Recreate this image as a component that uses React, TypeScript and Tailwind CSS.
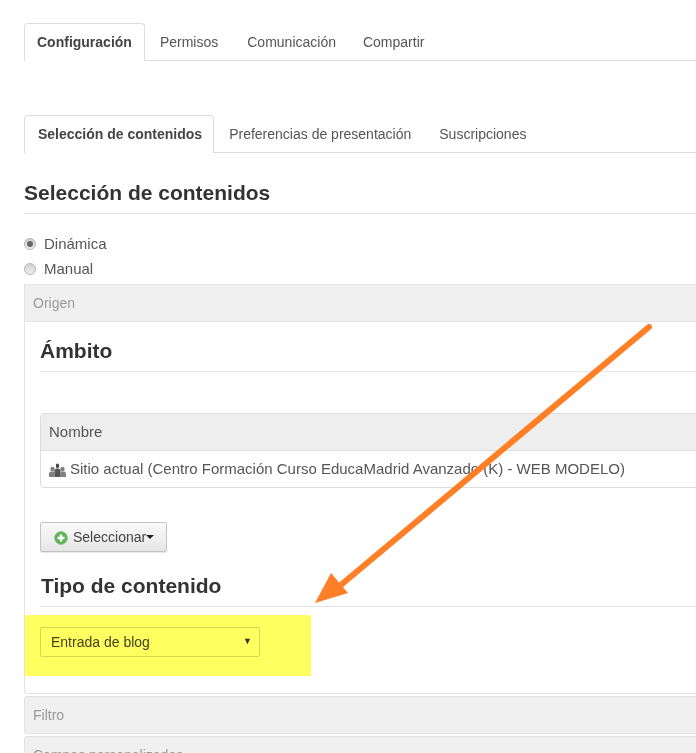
import React from 'react';

const font = { fontFamily: '"Liberation Sans", Arial, sans-serif' };

function Tab({ label, active, px }: { label: string; active?: boolean; px: string }) {
  return (
    <div
      className={`${px} h-[38px] -mb-px flex items-center rounded-t-[4px] border border-b-0 ${
        active
          ? 'bg-white border-[#dddddd] font-bold text-[#444444]'
          : 'border-transparent text-[#555555]'
      }`}
    >
      {label}
    </div>
  );
}

function Heading({ children, className }: { children: React.ReactNode; className: string }) {
  return <div className={`border-b border-[#e5e5e5] font-bold text-[#333333] text-[21px] leading-[24px] ${className}`}>{children}</div>;
}

function Radio({ checked, label }: { checked?: boolean; label: string }) {
  return (
    <div className="flex items-center h-[25px] text-[15px] text-[#555555]">
      <span className="w-[12px] h-[12px] -mt-[1px] rounded-full border border-[#b5b5b5] bg-gradient-to-b from-[#d0d0d0] to-[#f0f0f0] flex items-center justify-center mr-[8px]">
        {checked && <span className="w-[6px] h-[6px] rounded-full bg-[#666666]" />}
      </span>
      {label}
    </div>
  );
}

function SectionBar({ label, className }: { label: string; className: string }) {
  return (
    <div className={`border border-[#e3e3e3] rounded-t-[3px] bg-[#f0f0f0] px-2 flex items-center text-[14px] text-[#999999] ${className}`}>
      {label}
    </div>
  );
}

export default function App() {
  return (
    <div className="relative w-[696px] h-[753px] overflow-hidden bg-white" style={font}>
      <div className="w-[900px] pl-[24px] pt-[23px]">
        {/* top tabs */}
        <div className="flex border-b border-[#dddddd] text-[14px] h-[38px]">
          <Tab label="Configuración" active px="px-[12px]" />
          <Tab label="Permisos" px="pl-[14px] pr-[13px]" />
          <Tab label="Comunicación" px="pl-[14px] pr-[11px]" />
          <Tab label="Compartir" px="pl-[14px] pr-[14px]" />
        </div>

        {/* sub tabs */}
        <div className="flex border-b border-[#dddddd] text-[14px] h-[38px] mt-[54px]">
          <Tab label="Selección de contenidos" active px="pl-[13px] pr-[11px]" />
          <Tab label="Preferencias de presentación" px="pl-[14px] pr-[12px]" />
          <Tab label="Suscripciones" px="pl-[14px] pr-[14px]" />
        </div>

        <Heading className="mt-[28px] pb-[8px]">Selección de contenidos</Heading>

        <div className="mt-[18px]">
          <Radio checked label="Dinámica" />
          <Radio label="Manual" />
        </div>

        {/* Origen panel */}
        <div className="mt-[2px] border-l border-b border-[#e3e3e3] rounded-b-[3px] h-[410px]">
          <SectionBar label="Origen" className="h-[38px] -ml-px" />
          <div className="pl-[15px]">
            <Heading className="mt-[17px] pb-[8px]">Ámbito</Heading>

            <div className="mt-[41px] border border-[#dddddd] rounded-[4px] text-[15px] text-[#555555]">
              <div className="h-[37px] bg-[#eeeeee] border-b border-[#dddddd] px-2 flex items-center rounded-t-[4px]">Nombre</div>
              <div className="h-[36px] px-2 flex items-center">
                <svg width="17" height="14" viewBox="0 0 17 14" className="mr-[4px] mt-[1px]" fill="#808080">
                  <circle cx="3.5" cy="6" r="2.2" />
                  <circle cx="13.5" cy="6" r="2.2" />
                  <path d="M0 14v-4l1.5-1.5h4V14zM11.5 14V8.500h4L17 10v4z" />
                  <rect x="7" y="0.500" width="3" height="4.500" rx="1.500" fill="#444444" />
                  <path d="M5.500 14V7l1.500-1.500h3L11.500 7v7z" fill="#555555" />
                </svg>
                Sitio actual (Centro Formación Curso EducaMadrid Avanzado (K) - WEB MODELO)
              </div>
            </div>

            <button className="mt-[34px] w-[127px] h-[30px] border border-[#c4c4c4] rounded-[2px] bg-gradient-to-b from-[#fafafa] to-[#e6e6e6] flex items-center pl-[13px] text-[14px] text-[#444444] shadow-[0_1px_1px_rgba(0,0,0,0.1)]">
              <svg width="14" height="14" viewBox="0 0 14 14" className="mr-[5px] mt-[1px]">
                <circle cx="7" cy="7" r="6.500" fill="#5fb158" stroke="#9ccc96" />
                <path d="M7 3.500v7M3.500 7h7" stroke="#ffffff" strokeWidth="2.500" />
              </svg>
              Seleccionar
              <span className="w-0 h-0 border-x-[4px] border-x-transparent border-t-[4px] border-t-[#222222]" />
            </button>

            <Heading className="mt-[22px] pb-[8px] pl-[1px]">Tipo de contenido</Heading>

            <div className="mt-[20px] w-[220px] h-[30px] border border-[#d5d5d5] rounded-[2px] pl-[10px] pr-[7px] flex items-center justify-between text-[14px] text-[#444444]">
              Entrada de blog
              <span className="text-[9px] text-[#333333]">▼</span>
            </div>
          </div>
        </div>

        <SectionBar label="Filtro" className="h-[38px] mt-[2px] rounded-[3px]" />
        <SectionBar label="Campos personalizados" className="h-[38px] mt-[2px]" />
      </div>

      {/* highlight over the select */}
      <div className="absolute left-[25px] top-[615px] w-[286px] h-[61px] bg-[#ffff60] mix-blend-multiply" />

      {/* annotation arrow */}
      <svg className="absolute left-0 top-0 pointer-events-none" width="696" height="753">
        <line x1="649" y1="327" x2="342" y2="584" stroke="#ff7f27" strokeWidth="6" strokeLinecap="round" />
        <polygon points="315,603 331,573 348,593" fill="#ff7f27" />
      </svg>
    </div>
  );
}
